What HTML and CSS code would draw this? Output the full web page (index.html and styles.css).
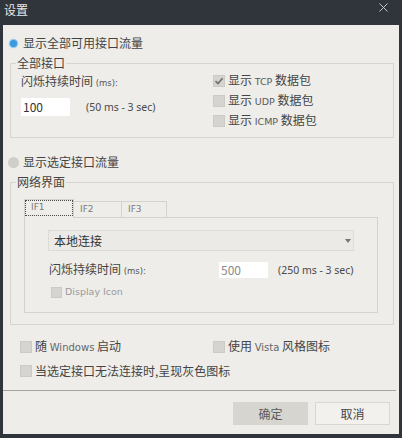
FILE: index.html
```html
<!DOCTYPE html>
<html lang="zh-CN">
<head>
<meta charset="utf-8">
<title>设置</title>
<link rel="stylesheet" href="styles.css">
</head>
<body>
<div class="window">
  <div class="titlebar">
    <span class="title">设置</span>
    <svg class="close" width="9" height="9" viewBox="0 0 9 9"><path d="M0.5 0.5L8.5 8.5M8.5 0.5L0.5 8.5" stroke="#c3c7cc" stroke-width="1" fill="none"/></svg>
  </div>
  <div class="client">
    <div class="main">
      <div class="radio-row"><span class="radio on"></span><span>显示全部可用接口流量</span></div>
      <fieldset class="group g1">
        <legend>全部接口</legend>
        <div class="g1-grid">
          <div class="g1-left">
            <div class="line">闪烁持续时间 <span class="lat">(ms):</span></div>
            <div class="input-row"><span class="input">100</span><span class="range">(50 ms - 3 sec)</span></div>
          </div>
          <div class="g1-right">
            <div class="check-row"><span class="cb checked"><svg width="10" height="10" viewBox="0 0 10 10"><path d="M1.5 5.2L4 7.6L8.6 2.2" stroke="#707070" stroke-width="1.7" fill="none"/></svg></span><span>显示 <span class="sm">TCP</span> 数据包</span></div>
            <div class="check-row"><span class="cb"></span><span>显示 <span class="sm">UDP</span> 数据包</span></div>
            <div class="check-row"><span class="cb"></span><span>显示 <span class="sm">ICMP</span> 数据包</span></div>
          </div>
        </div>
      </fieldset>
      <div class="radio-row r2"><span class="radio"></span><span>显示选定接口流量</span></div>
      <fieldset class="group g2">
        <legend>网络界面</legend>
        <div class="tabs">
          <span class="tab active"><span class="focus">IF1</span></span>
          <span class="tab">IF2</span>
          <span class="tab t3">IF3</span>
        </div>
        <div class="panel">
          <div class="select"><span>本地连接</span><span class="arrow"></span></div>
          <div class="p-row"><span class="p-label">闪烁持续时间 <span class="lat">(ms):</span></span><span class="input gray">500</span><span class="range r250">(250 ms - 3 sec)</span></div>
          <div class="check-row dis-row"><span class="cb small"></span><span class="dis">Display Icon</span></div>
        </div>
      </fieldset>
    </div>
    <div class="options">
      <div class="check-row"><span class="cb"></span><span>随 <span class="win">Windows</span> 启动</span></div>
      <div class="check-row"><span class="cb"></span><span>使用 <span class="win">Vista</span> 风格图标</span></div>
      <div class="check-row wide"><span class="cb"></span><span>当选定接口无法连接时,呈现灰色图标</span></div>
    </div>
    <div class="footer">
      <button class="btn ok">确定</button>
      <button class="btn cancel">取消</button>
    </div>
  </div>
</div>
</body>
</html>
```
FILE: styles.css
```css
* { box-sizing: border-box; }
html, body { margin: 0; padding: 0; }
body {
  width: 402px;
  height: 438px;
  overflow: hidden;
  background: #2f353b;
  font-family: "Noto Sans CJK SC", "Noto Sans", sans-serif;
  font-size: 12px;
  line-height: 16px;
  color: #444;
}
.window {
  height: 438px;
  display: flex;
  flex-direction: column;
  padding: 0 3px 4px;
}
.titlebar {
  flex: none;
  height: 25px;
  display: flex;
  justify-content: space-between;
  align-items: flex-start;
  padding: 2px 11px 0 1px;
  color: #e8e8e8;
}
.close { margin-top: 1px; }
.client {
  flex: 1;
  background: #eeede9;
  display: flex;
  flex-direction: column;
}
.main { padding: 10px 5px 0 7px; }
.radio-row {
  display: flex;
  align-items: center;
  gap: 4px;
  height: 16px;
  margin-left: -2px;
}
.radio {
  flex: none;
  width: 11px;
  height: 11px;
  border-radius: 50%;
  background: #cfcec9;
}
.radio.on {
  background: radial-gradient(circle, #3b99de 0 3.3px, #9ccbed 3.9px 4.4px, transparent 5.2px);
}
.r2 { margin-top: 16px; }
.group {
  margin: 4px 0 0;
  padding: 0;
  border: 1px solid #d5d4cf;
  min-width: 0;
}
.group legend {
  margin-left: 5px;
  padding: 0 1px;
  line-height: 16px;
}
.g1-grid {
  display: grid;
  grid-template-columns: 192px 1fr;
  padding: 0 0 6px 10px;
}
.line { margin-top: 2px; }
.lat {
  font-family: "DejaVu Sans", sans-serif;
  font-size: 8.5px;
  color: #555;
}
.input-row {
  display: flex;
  align-items: center;
  gap: 16px;
  margin-top: 7px;
}
.input {
  flex: none;
  display: block;
  width: 49px;
  height: 18px;
  line-height: 18px;
  background: #fff;
  padding-left: 2px;
  color: #333;
}
.input.gray {
  height: 16px;
  line-height: 16px;
  color: #8a8a8a;
}
.range {
  font-family: "Noto Sans", sans-serif;
  font-size: 10.5px;
  color: #4a4a4a;
}
.check-row {
  display: flex;
  align-items: center;
  gap: 3px;
  height: 20px;
}
.cb {
  flex: none;
  width: 12px;
  height: 12px;
  background: #d5d4d0;
  border: 1px solid #cbcac5;
  display: flex;
  align-items: center;
  justify-content: center;
}
.cb.small { width: 11px; height: 11px; }
.sm {
  font-family: "DejaVu Sans", sans-serif;
  font-size: 9.5px;
  color: #5a5a5a;
}
.win {
  font-family: "DejaVu Sans", sans-serif;
  font-size: 10px;
  color: #666;
}
.g2 { padding-bottom: 11px; }
.tabs {
  display: flex;
  align-items: flex-end;
  margin: 9px 15px 0 13px;
  font-family: "DejaVu Sans", sans-serif;
  font-size: 9px;
  color: #7a7a7a;
}
.tab {
  width: 49px;
  height: 16px;
  margin-left: -1px;
  border: 1px solid #d3d2cd;
  border-bottom: none;
  padding-left: 6px;
  line-height: 14px;
}
.tab.t3 { width: 46px; }
.tab.active {
  position: relative;
  z-index: 1;
  width: 50px;
  height: 19px;
  margin-left: 0;
  margin-bottom: -1px;
  padding: 0;
  background: #eeede9;
}
.focus {
  display: block;
  width: 48px;
  height: 16px;
  border: 1px dotted #4a4a4a;
  padding-left: 5px;
  line-height: 13px;
}
.panel {
  margin: 0 15px 0 13px;
  border: 1px solid #d3d2cd;
  padding: 12px 0 12px 23px;
}
.select {
  width: 306px;
  height: 21px;
  background: #ebeae6;
  border: 1px solid #dcdbd6;
  display: flex;
  align-items: center;
  justify-content: space-between;
  padding: 0 2px 0 5px;
  color: #333;
}
.arrow {
  width: 0;
  height: 0;
  border-left: 3px solid transparent;
  border-right: 3px solid transparent;
  border-top: 4px solid #777;
}
.p-row {
  display: flex;
  align-items: center;
  height: 16px;
  margin: 11px 0 0 1px;
}
.p-label { width: 170px; flex: none; }
.r250 { margin-left: 10px; }
.dis-row {
  height: 16px;
  margin: 6px 0 0 3px;
}
.dis {
  font-family: "DejaVu Sans", sans-serif;
  font-size: 9.5px;
  color: #9a9a9a;
}
.options {
  display: grid;
  grid-template-columns: 193px 1fr;
  row-gap: 4px;
  padding: 12px 0 0 17px;
}
.options .wide { grid-column: 1 / 3; }
.footer {
  margin: 9px 3px 0 0;
  border-top: 1px solid #a6a5a1;
  padding: 11px 6px 0 0;
  display: flex;
  justify-content: flex-end;
  gap: 7px;
}
.btn {
  width: 75px;
  height: 23px;
  padding: 0;
  font-family: "Noto Sans CJK SC", "Noto Sans", sans-serif;
  font-size: 12px;
  border: 1px solid #d8d7d2;
  border-radius: 0;
}
.btn.ok {
  background: #d6d5d0;
  border-color: #d6d5d0;
  color: #5a5a5a;
}
.btn.cancel {
  background: #f2f1ed;
  color: #454545;
}
```
